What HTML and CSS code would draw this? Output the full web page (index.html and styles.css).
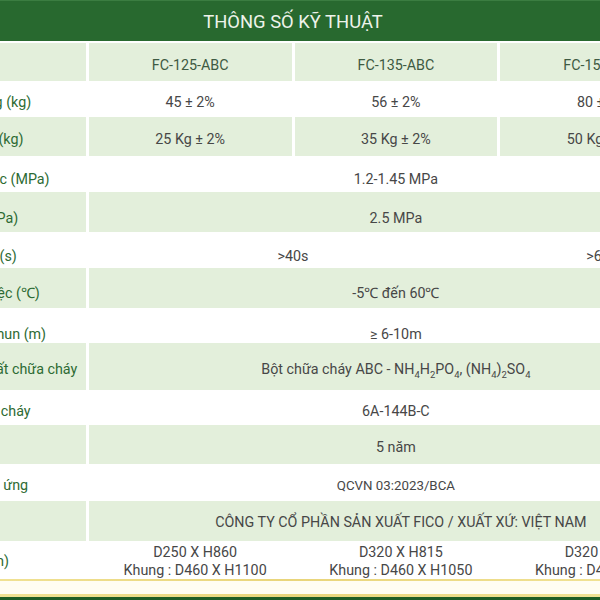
FILE: index.html
```html
<!DOCTYPE html>
<html lang="vi">
<head>
<meta charset="utf-8">
<title>Thông số kỹ thuật</title>
<link rel="stylesheet" href="styles.css">
</head>
<body>
<div class="sheet">
  <div class="title">THÔNG SỐ KỸ THUẬT</div>
  <div class="spec">
    <div class="row shade r1">
      <div class="label"></div>
      <div class="cell model">FC-125-ABC</div>
      <div class="cell model">FC-135-ABC</div>
      <div class="cell model">FC-150-ABC</div>
    </div>
    <div class="row r2">
      <div class="label">Khối lượng tổng (kg)</div>
      <div class="cell">45 ± 2%</div>
      <div class="cell">56 ± 2%</div>
      <div class="cell">80 ± 2%</div>
    </div>
    <div class="row shade r3">
      <div class="label">Khối lượng bột (kg)</div>
      <div class="cell">25 Kg ± 2%</div>
      <div class="cell">35 Kg ± 2%</div>
      <div class="cell">50 Kg ± 2%</div>
    </div>
    <div class="row r4">
      <div class="label">Áp suất làm việc (MPa)</div>
      <div class="cell span3">1.2-1.45 MPa</div>
    </div>
    <div class="row shade r5">
      <div class="label">Áp suất thử (MPa)</div>
      <div class="cell span3">2.5 MPa</div>
    </div>
    <div class="row r6">
      <div class="label">Thời gian phun (s)</div>
      <div class="cell span2">&gt;40s</div>
      <div class="cell">&gt;60s</div>
    </div>
    <div class="row shade r7">
      <div class="label">Nhiệt độ làm việc (℃)</div>
      <div class="cell span3">-5℃ đến 60℃</div>
    </div>
    <div class="row r8">
      <div class="label">Khoảng cách phun (m)</div>
      <div class="cell span3">≥ 6-10m</div>
    </div>
    <div class="row shade r9">
      <div class="label">Thành phần chất chữa cháy</div>
      <div class="cell span3"><span class="formula">Bột chữa cháy ABC - NH<sub>4</sub>H<sub>2</sub>PO<sub>4</sub>, (NH<sub>4</sub>)<sub>2</sub>SO<sub>4</sub></span></div>
    </div>
    <div class="row r10">
      <div class="label">Khả năng chữa cháy</div>
      <div class="cell span3">6A-144B-C</div>
    </div>
    <div class="row shade r11">
      <div class="label">Bảo hành</div>
      <div class="cell span3">5 năm</div>
    </div>
    <div class="row r12">
      <div class="label">Tiêu chuẩn đáp ứng</div>
      <div class="cell span3 small">QCVN 03:2023/BCA</div>
    </div>
    <div class="row shade r13">
      <div class="label">Nhà sản xuất</div>
      <div class="cell span3 shift">CÔNG TY CỔ PHẦN SẢN XUẤT FICO / XUẤT XỨ: VIỆT NAM</div>
    </div>
    <div class="row r14">
      <div class="label">Kích thước (mm)</div>
      <div class="cell shift"><span>D250 X H860<br>Khung : D460 X H1100</span></div>
      <div class="cell shift"><span>D320 X H815<br>Khung : D460 X H1050</span></div>
      <div class="cell shift"><span>D320 X H950<br>Khung : D460 X H1200</span></div>
    </div>
  </div>
  <div class="footer">
    <div class="gold"></div>
    <div class="cream"></div>
    <div class="gold thick"></div>
    <div class="green"></div>
  </div>
</div>
</body>
</html>
```
FILE: styles.css
```css
html, body {
  margin: 0;
  padding: 0;
  background: #ffffff;
  overflow: hidden;
}
body {
  width: 600px;
  height: 600px;
  font-family: Roboto, "Liberation Sans", sans-serif;
}
.sheet {
  width: 820px;
  margin-left: -117px;
}
.title {
  height: 41px;
  background: #28692f;
  border-top: 1px solid #3b7d41;
  box-sizing: border-box;
  color: #eef3ea;
  font-size: 18.4px;
  display: flex;
  align-items: center;
  justify-content: center;
  padding-top: 1px;
  margin-bottom: 2px;
}
.spec {
  display: flex;
  flex-direction: column;
}
.row {
  display: grid;
  grid-template-columns: repeat(4, 1fr);
  column-gap: 3px;
  font-size: 14.3px;
  color: #474747;
}
.row > div {
  display: flex;
  align-items: center;
  box-sizing: border-box;
  padding-top: 5px;
}
.shade > div {
  background: #e3efdb;
}
.label {
  color: #2d6b33;
  padding-left: 19px;
  white-space: nowrap;
}
.cell {
  justify-content: center;
  text-align: center;
}
.model {
  color: #3e5a42;
}
.span3 { grid-column: span 3; }
.span2 { grid-column: span 2; }
.small { font-size: 13.3px; }
.shift { padding-left: 10px; }
.formula {
  line-height: 18px;
}
sub {
  font-size: 9.5px;
  vertical-align: -4px;
  line-height: 0;
}
.r1 { height: 38px; }
.r2 { height: 36px; }
.r3 { height: 39px; }
.r4 { height: 36px; }
.r5 { height: 40px; }
.r6 { height: 36px; }
.r7 { height: 40px; }
.r8 { height: 35px; }
.r9 { height: 47px; }
.r10 { height: 35px; }
.r11 { height: 39px; }
.r12 { height: 37px; }
.r13 { height: 40px; }
.r14 { height: 38px; line-height: 18px; }
.r4 > div { padding-top: 9px; }
.r5 > div { padding-top: 12px; }
.r6 > div { padding-top: 11px; }
.r7 > div { padding-top: 9px; }
.r8 > div { padding-top: 16px; }
.r9 > div { padding-top: 4px; }
.r10 > div { padding-top: 6px; }
.r11 > div { padding-top: 5px; }
.r13 > div { padding-top: 1px; }
.r14 > div { padding-top: 1px; }
.footer {
  display: flex;
  flex-direction: column;
}
.gold {
  height: 2px;
  background: linear-gradient(90deg, #f3e69c, #e9d57a 50%, #f3e69c);
}
.cream {
  height: 13px;
  background: #fffdf2;
}
.thick {
  height: 3px;
}
.green {
  height: 10px;
  background: #1e5d25;
}
```
